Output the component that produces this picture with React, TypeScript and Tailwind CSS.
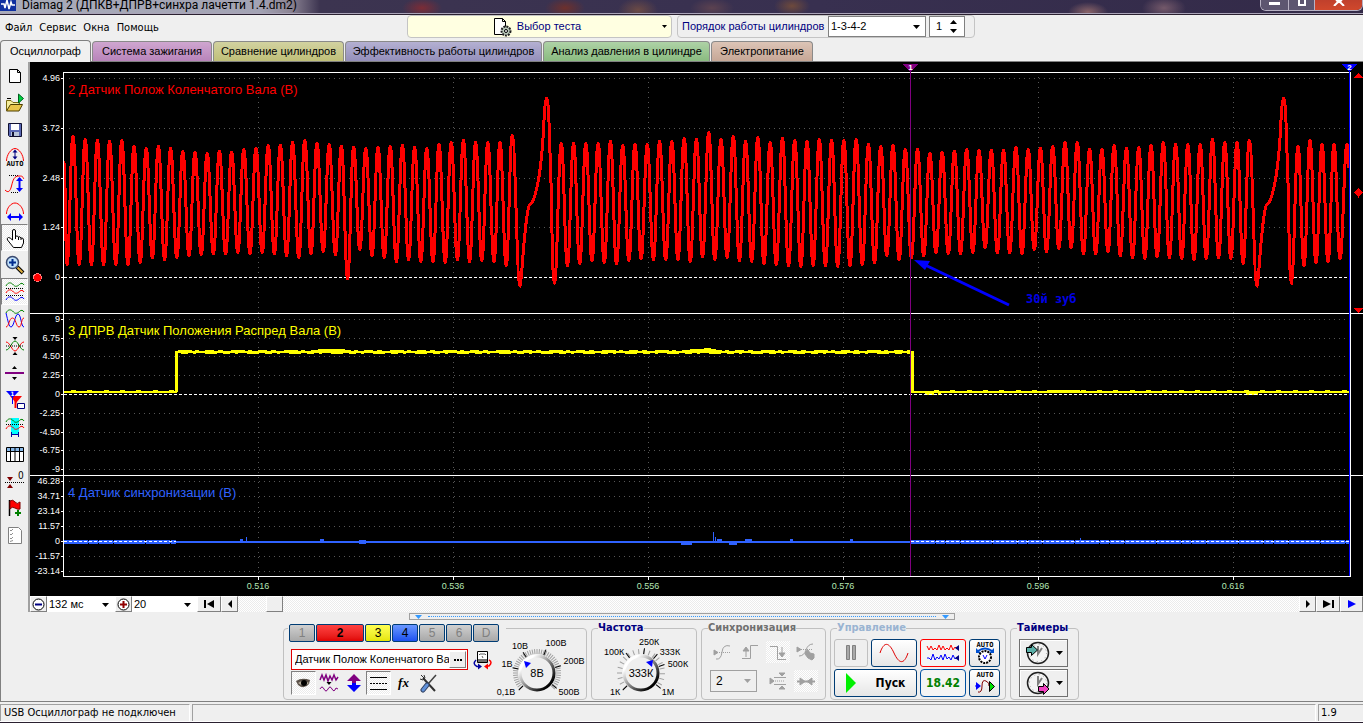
import { type ReactNode } from 'react';
import clsx from 'clsx';

const UI_FONT = "font-['DejaVu_Sans_Condensed','DejaVu_Sans',sans-serif]";
const SANS = "font-['Liberation_Sans',sans-serif]";
const CHECKER = 'bg-[repeating-conic-gradient(#ffffff_0_25%,#ebebeb_0_50%)] bg-[length:2px_2px]';

/* ---------- waveform data ---------- */

type Point = [number, number];

const firstPeaks = [
  136, 139, 140, 141, 140, 146, 148, 146, 148, 151, 152, 153, 151, 152, 149, 148, 145, 145, 142, 140, 143, 144, 146,
  147, 148, 147, 146, 145, 147, 148, 144, 142, 140, 142, 142, 142, 135,
];
const firstTroughs = [
  265, 265, 265, 265, 265, 265, 263, 258, 260, 258, 256, 255, 254, 254, 253, 254, 253, 254, 256, 258, 254, 252, 255,
  279, 250, 256, 258, 262, 260, 262, 262, 263, 260, 262, 261, 262, 266,
];
const secondPeaks = [
  143, 143, 143, 143, 141, 145, 144, 144, 141, 141, 138, 139, 132, 139, 136, 141, 137, 142, 138, 140, 141, 139, 140,
  140, 139, 144, 146, 145, 149, 149, 153, 152, 151, 149, 150, 150, 150, 147, 149, 148, 146, 142, 142, 149, 149, 145,
  148, 147, 145, 142, 144, 144, 144, 139, 142, 142, 140,
];
const secondTroughs = [
  266, 264, 261, 263, 264, 261, 259, 260, 260, 260, 262, 257, 260, 258, 261, 262, 264, 265, 266, 267, 266, 266, 267,
  266, 265, 263, 256, 260, 258, 256, 253, 254, 254, 253, 248, 253, 253, 254, 250, 252, 249, 248, 254, 254, 252, 256,
  258, 259, 257, 258, 259, 260, 259, 258, 259, 264,
];

const buildCrank = () => {
  const pts: Point[] = [[64, 162]];
  firstPeaks.forEach((peak, i) => {
    pts.push([67 + i * 12.2, firstTroughs[i]], [73 + i * 12.2, peak]);
  });
  pts.push([520, 286]);
  const segs = [wave(pts), gap(0)];
  const mid: Point[] = [[554.5, 283]];
  secondPeaks.forEach((peak, i) => {
    mid.push([561.3 + i * 12.286, peak]);
    if (i < secondTroughs.length) mid.push([567.4 + i * 12.286, secondTroughs[i]]);
  });
  mid.push([1257, 286]);
  segs.push(wave(mid).replace('M', 'L'), gap(737));
  segs.push(
    wave([
      [1291.5, 281], [1298, 146], [1304, 266], [1310, 140], [1316, 263], [1322, 144], [1328, 262], [1334, 144],
      [1340, 259], [1347, 144],
    ]).replace('M', 'L'),
  );
  return segs.join(' ') + ' L1349 168';
};

// Smooth curve through alternating peaks and troughs
const wave = (pts: Point[]) =>
  pts
    .map(([x, y], i) => {
      if (i === 0) return `M${x} ${y}`;
      const [px, py] = pts[i - 1];
      const m = (x - px) * 0.4;
      return `C${px + m} ${py} ${x - m} ${y} ${x} ${y}`;
    })
    .join(' ');

// The two missing teeth of the crankshaft wheel
const gap = (dx: number) =>
  `C${522 + dx} 282 ${524 + dx} 222 ${529 + dx} 206 L${533 + dx} 201 C${538 + dx} 188 ${541 + dx} 170 ${543 + dx} 138 ` +
  `C${544 + dx} 120 ${545 + dx} 98 ${546.5 + dx} 98 C${549 + dx} 98 ${549 + dx} 130 ${550.5 + dx} 165 ` +
  `C${552 + dx} 205 ${552 + dx} 283 ${554.5 + dx} 283`;

const crankPath = buildCrank();

const scales = [
  { y: 78, label: '4.96' }, { y: 128, label: '3.72' }, { y: 178, label: '2.48' }, { y: 227, label: '1.24' },
  { y: 277, label: '0', zero: true },
  { y: 319, label: '9' }, { y: 338, label: '6.75' }, { y: 356, label: '4.50' }, { y: 375, label: '2.25' },
  { y: 394, label: '0', zero: true },
  { y: 413, label: '-2.25' }, { y: 432, label: '-4.50' }, { y: 450, label: '-6.75' }, { y: 469, label: '-9' },
  { y: 481, label: '46.28' }, { y: 496, label: '34.71' }, { y: 511, label: '23.14' }, { y: 526, label: '11.57' },
  { y: 541, label: '0' },
  { y: 556, label: '-11.57' }, { y: 571, label: '-23.14' },
];

const times = [
  { x: 258, label: '0.516' }, { x: 453, label: '0.536' }, { x: 648, label: '0.556' },
  { x: 843, label: '0.576' }, { x: 1038, label: '0.596' }, { x: 1233, label: '0.616' },
];

function Scope() {
  return (
    <svg viewBox="30 62 1333 534" className={clsx('block w-full bg-black', SANS)} shapeRendering="crispEdges">
      <g stroke="#565656" strokeDasharray="1 4">
        {scales.map(s => !s.zero && <path key={s.y} d={`M69 ${s.y + 0.5}H1349`} />)}
        {times.map(t => <path key={t.x} d={`M${t.x + 0.5} 77V576`} />)}
      </g>

      <path d="M64 392H176V351.5H911.5V392H1349" fill="none" stroke="#ffff00" strokeWidth="2" />
      <path d="M176 392V351.5M912 351V392" stroke="#ffff00" strokeWidth="3" />
      <g stroke="#ffff00" fill="none">
        <path d="M71 390.5H174M934 390.5H1349" strokeWidth="1" strokeDasharray="5 11.3" />
        <path d="M178 350.5H910" strokeWidth="2" strokeDasharray="14 3 4 6 9 4 5 8" />
        <path d="M181 353H910" strokeWidth="1" strokeDasharray="7 5 3 9 12 6" />
        <path d="M318 349.5H345M690 349.5H716M704 348.5H711" strokeWidth="2" />
        <path d="M925 393.5H934M938 393.5H941M1246 393.5H1258M1047 391H1080" strokeWidth="2" />
      </g>

      <g stroke="#2f62ff" fill="none">
        <path d="M64 541.5H1349" strokeWidth="2" />
        <path d="M64 541.5H176M911 541.5H1349" strokeWidth="4" strokeDasharray="24 1 9 1 14 1 31 1" />
        <path d="M240 541H243M320 541H324M359 542H366M681 542.5H692M717 541H722M729 543H737M745 541H752M790 541H793M850 541H853" strokeWidth="4" />
        <path d="M713.5 532V541M715.5 537V541M1080.5 538V541M246.5 537V541" />
      </g>

      <g stroke="#ffffff" strokeDasharray="3 2">
        <path d="M64 277.5H1350M64 394.5H1350M64 541.5H176M911 541.5H1349" />
      </g>

      <path d={crankPath} fill="none" stroke="#ff0000" strokeWidth="3" />

      <g stroke="#ffffff" fill="none">
        <path d="M63.5 577V72.5H1350.5V576.5H63M30 313.5H1363M30 475.5H1363" />
        {scales.map(s => <path key={s.y} d={`M61 ${s.y + 0.5}H63`} />)}
        {times.map(t => <path key={t.x} d={`M${t.x + 0.5} 577V580`} />)}
      </g>

      <path d="M910.5 72V576" stroke="#800080" />
      <path d="M1349 72V576" stroke="#0000ff" />
      <path d="M903 64H918L910.5 72Z" fill="#800080" />
      <path d="M1342 64H1357L1349.5 72Z" fill="#0000ff" />
      <g fill="#ffffff" fontSize="8" fontWeight="700" textAnchor="middle">
        <text x="910.5" y="70">1</text>
        <text x="1349.5" y="70">2</text>
      </g>

      <g fill="#ff0000">
        <path d="M1354 78H1363L1358.5 73ZM1354 308H1363L1358.5 313ZM1353.5 192.5L1358.5 187.5L1363 192.5L1358.5 197.5Z" />
        <circle cx="37.5" cy="277.5" r="4" stroke="#ff8080" />
      </g>

      <g shapeRendering="auto">
        <path d="M1009 305L922 263.5" stroke="#0000ff" strokeWidth="3" />
        <path d="M914 260L930 261L925 270Z" fill="#0000ff" />
      </g>

      <g fill="#ffffff" fontSize="9" textAnchor="end">
        {scales.map(s => <text key={s.y} x="60" y={s.y + 3}>{s.label}</text>)}
      </g>
      <g fill="#b4e6b4" fontSize="9" textAnchor="middle">
        {times.map(t => <text key={t.x} x={t.x} y="589">{t.label}</text>)}
      </g>
      <g fontSize="13">
        <text x="68" y="94" fill="#ff0000">2 Датчик Полож Коленчатого Вала (В)</text>
        <text x="68" y="335" fill="#ffff00">3 ДПРВ Датчик Положения Распред Вала (В)</text>
        <text x="68" y="497" fill="#2f62ff">4 Датчик синхронизации (В)</text>
      </g>
      <text x="1026" y="303" fill="#0000e6" fontSize="12" fontWeight="700" className="font-['DejaVu_Sans_Mono',monospace]">
        30й зуб
      </text>
    </svg>
  );
}

/* ---------- icons ---------- */

function Icon({ children, size = 20 }: { children: ReactNode; size?: number }) {
  return (
    <svg width={size} height={size} viewBox={`0 0 ${size} ${size}`} fill="none" stroke="#000" className="shrink-0">
      {children}
    </svg>
  );
}

const autoText = (
  <text x="10" y="19" textAnchor="middle" fontSize="7" fontWeight="700" fill="#000" stroke="none"
    className="font-['DejaVu_Sans_Mono',monospace]">AUTO</text>
);

const sideTools: { name: string; pressed?: boolean; icon: ReactNode }[] = [
  { name: 'Новый', icon: <path d="M4.500 3.500H12.500L15.500 6.500V16.500H4.500ZM12.500 3.500V6.500H15.500" fill="#fff" /> },
  {
    name: 'Открыть',
    icon: (
      <>
        <path d="M1.500 17.500V7.500H6L8 9.500H14.500V11" fill="#f5ee9c" stroke="#7a6a10" />
        <path d="M1.500 18L5.500 11.500H17.500L14 18Z" fill="#e9c64a" stroke="#4c3f00" />
        <path d="M13.500 1V10L18.500 5.500Z" fill="#00d040" stroke="#006020" />
        <path d="M2 5.500H6" />
      </>
    ),
  },
  {
    name: 'Сохранить',
    icon: (
      <>
        <path d="M3.500 3.500H16.500V16.500H4.500L3.500 15.500Z" fill="#5a68b4" stroke="#101030" />
        <path d="M6 4H14V10H6Z" fill="#fff" stroke="none" />
        <path d="M6 12H14V16H6Z" fill="#b8c4d8" stroke="none" />
        <path d="M7 12H9V16H7Z" fill="#101030" stroke="none" />
      </>
    ),
  },
  {
    name: 'Автоамплитуда',
    icon: (
      <>
        <path d="M1.500 14C1.500 8 6 1.500 10 1.500S18.500 8 18.500 14" stroke="#ff0000" />
        <path d="M10 4V11" stroke="#000080" />
        <path d="M7.500 5.500L10 2.500L12.500 5.500ZM7.500 9.500L10 12.500L12.500 9.500Z" fill="#000080" stroke="none" />
        {autoText}
      </>
    ),
  },
  {
    name: 'Амплитуда',
    icon: (
      <>
        <path d="M4 1.500H14M6 18.500H14" strokeDasharray="1 1" />
        <path d="M0 16C3 19 5 18 6.500 12S9 2 14 2S17 3 19 5" stroke="#ff0000" />
        <path d="M14.500 4V16" stroke="#0000ff" strokeWidth="2" />
        <path d="M11 7L14.500 3L18 7ZM11 14L14.500 18L18 14Z" fill="#0000ff" stroke="none" />
      </>
    ),
  },
  {
    name: 'Развёртка',
    icon: (
      <>
        <path d="M1.500 13C1.500 7 6 2 10 2S18.500 7 18.500 13" stroke="#ff0000" />
        <path d="M5 16H15" stroke="#0000ff" strokeWidth="2" />
        <path d="M6 12L2 16L6 20ZM14 12L18 16L14 20Z" fill="#0000ff" stroke="none" />
      </>
    ),
  },
  {
    name: 'Рука',
    pressed: true,
    icon: (
      <path d="M7.500 12V3Q7.500 1.500 9 1.500T10.500 3V8.500Q12 7 13.500 9Q15 8 16 10Q18.500 9.500 18.500 12V15L16.500 19.500H8.500L2.500 12Q1.500 10 3.500 9.500Q5 9.500 7.500 12ZM10.500 8V11M13.500 9V12M16 10V12" fill="#fff" />
    ),
  },
  {
    name: 'Масштаб',
    icon: (
      <>
        <path d="M12 12L18 18" stroke="#000" strokeWidth="4" />
        <path d="M12.500 12.500L17.500 17.500" stroke="#e0b040" strokeWidth="2" />
        <circle cx="7.500" cy="7.500" r="6" fill="#bfe0fb" stroke="#3a4a70" strokeWidth="1.500" />
        <path d="M7.500 4V11M4 7.500H11" stroke="#002c90" strokeWidth="2" />
      </>
    ),
  },
  {
    name: 'Раздельно',
    pressed: true,
    icon: (
      <>
        <path d="M1 4C3 0 6 0 8.500 3S14 3 15 2S18 1 19 3" stroke="#008000" />
        <path d="M1 11C3 7 6 7 8.500 10S14 10 15 9S18 8 19 10" stroke="#ff0000" />
        <path d="M1 18C3 14 6 14 8.500 17S14 17 15 16S18 15 19 17" stroke="#0000ff" />
        <path d="M1 6.500H19M1 13.500H19" strokeDasharray="1 1" />
      </>
    ),
  },
  {
    name: 'Совместно',
    icon: (
      <>
        <path d="M1 4C3 0 6 0 8.500 3S14 3 15 2S18 1 19 3" stroke="#008000" />
        <path d="M1 4C3 12 4 18 6 18C9 18 10 5 13 5C16 5 16 18 19 18" stroke="#0000ff" />
        <path d="M1 18C4 18 4 9 7.500 9S11 18 14 18S16 9 19 9" stroke="#ff0000" />
      </>
    ),
  },
  {
    name: 'Центрировать',
    icon: (
      <>
        <path d="M1 6C5 6 7 15 10 15S15 6 19 6" stroke="#ff0000" />
        <path d="M1 14C5 14 7 5 10 5S15 14 19 14" stroke="#008000" />
        <path d="M1 10H19" strokeDasharray="1 1" />
        <path d="M7.500 1H12.500L10 4ZM7.500 19H12.500L10 16Z" fill="#000" stroke="none" />
      </>
    ),
  },
  {
    name: 'Разделитель',
    icon: (
      <>
        <path d="M0 10H19" stroke="#800080" strokeWidth="2" />
        <path d="M7 6H12L9.500 3ZM7 14H12L9.500 17Z" fill="#000" stroke="none" />
      </>
    ),
  },
  {
    name: 'Маркеры',
    icon: (
      <>
        <path d="M5 6H17L11 13Z" fill="#ff0000" stroke="none" />
        <path d="M10.500 10V18" stroke="#ff0000" strokeWidth="2" />
        <path d="M1 1H14L7.500 8Z" fill="#0000ff" stroke="none" />
        <path d="M7.500 7V14" stroke="#0000ff" />
        <text x="7.500" y="6" fontSize="6" fontWeight="700" fill="#fff" stroke="none" textAnchor="middle">1</text>
        <path d="M12.500 13.500H19.500V18.500H12.500Z" fill="#fff" stroke="#000080" />
      </>
    ),
  },
  {
    name: 'Выделение',
    icon: (
      <>
        <path d="M6 1H14V18H6Z" fill="#00ffff" stroke="none" />
        <path d="M1 5C3 1 6 1 8.500 4S14 4 15 3S18 2 19 4" stroke="#008000" />
        <path d="M1 12C3 8 6 8 8.500 11S14 11 15 10S18 9 19 11" stroke="#ff0000" />
        <path d="M1 7.500H19" strokeDasharray="1 1" />
        <path d="M6 17.500H14M6.500 15V20M13.500 15V20" stroke="#0000a0" />
      </>
    ),
  },
  {
    name: 'Таблица',
    icon: (
      <>
        <path d="M1.500 3.500H18.500V17.500H1.500Z" fill="#fff" />
        <path d="M2 4H18V7H2Z" fill="#88b8e8" stroke="none" />
        <path d="M1.500 7.500H18.500M5.500 4V17M10 4V17M14.500 4V17" />
      </>
    ),
  },
  {
    name: 'Ноль',
    icon: (
      <>
        <path d="M0 11.500H19" strokeDasharray="1 1" />
        <path d="M2 6H8L5 10ZM2 17H8L5 13Z" fill="#800000" stroke="none" />
        <text x="13" y="8" fontSize="10" fill="#000" stroke="none">0</text>
      </>
    ),
  },
  {
    name: 'Флаг',
    icon: (
      <>
        <path d="M4.500 2V18" strokeWidth="1.500" />
        <path d="M5 3Q8 1 10 4T15 4V11Q13 12 10 10T5 11Z" fill="#ff0000" stroke="#800000" />
        <path d="M10 15H16M13 12V18" stroke="#008000" strokeWidth="2" />
      </>
    ),
  },
  {
    name: 'Отчёт',
    icon: (
      <>
        <path d="M3.500 2.500H13.500L16.500 5.500V18.500H3.500Z" fill="#fff" stroke="#808080" />
        <path d="M5 5L6 6L8 4M5 9L6 10L8 8M5 13L6 14L8 12M5 16.500L8 15.500" stroke="#909090" />
      </>
    ),
  },
];

const DownArrow = ({ className }: { className?: string }) => (
  <svg width="7" height="4" viewBox="0 0 7 4" className={clsx('shrink-0 pointer-events-none', className)}>
    <path d="M0 0H7L3.500 4Z" fill="currentColor" />
  </svg>
);

/* ---------- header ---------- */

function TitleBar() {
  return (
    <header className="h-[15px] shrink-0 flex items-start justify-between overflow-hidden border-b border-[#2a2030] shadow-[inset_0_-1px_0_#aaa4b8] bg-[radial-gradient(ellipse_20px_10px_at_422px_8px,#7c2c36,transparent),radial-gradient(ellipse_20px_10px_at_565px_8px,#6e302c,transparent),radial-gradient(ellipse_20px_12px_at_638px_10px,#6b4a45,transparent),radial-gradient(ellipse_22px_10px_at_712px_8px,#5c4250,transparent),radial-gradient(ellipse_18px_10px_at_792px_6px,#6e4a3c,transparent),radial-gradient(ellipse_20px_10px_at_1088px_12px,#8a6468,transparent),radial-gradient(ellipse_22px_12px_at_1164px_8px,#74596a,transparent),linear-gradient(90deg,#a9acba_0,#a3a3b4_260px,#8d8595_290px,#3c3450_320px,#383050_60%,#332a48_100%)]">
      <div className="flex items-start gap-[6px]">
        <svg width="16" height="12" viewBox="0 0 16 12">
          <path d="M0 0H16V11H0Z" fill="#1030a0" />
          <path d="M1 4H4L5 8L7 0L9 9L11 2L12 5H15" fill="none" stroke="#fff" strokeWidth="1.500" />
        </svg>
        <h1 className="text-[12px] leading-[10px] whitespace-nowrap text-black font-[Roboto,sans-serif]">
          Diamag 2 (ДПКВ+ДПРВ+синхра лачетти 1.4.dm2)
        </h1>
      </div>
      <div className="flex h-[11px] rounded-b-md border border-t-0 border-[#b8b2c4] overflow-hidden">
        <button aria-label="Свернуть" className="w-[28px] flex justify-center bg-[#5d5670] border-r border-[#b8b2c4]">
          <span className="mt-[2px] h-[3px] w-[11px] bg-white" />
        </button>
        <button aria-label="Развернуть" className="w-[26px] flex justify-center bg-[#5d5670] border-r border-[#b8b2c4]">
          <span className="h-[6px] w-[8px] border-2 border-t-0 border-white" />
        </button>
        <button aria-label="Закрыть" className="w-[47px] flex justify-center bg-linear-to-b from-[#c0402c] to-[#d0482c]">
          <svg width="12" height="6" viewBox="0 0 12 6"><path d="M1 6L6 1L11 6M3 0L6 2L9 0" stroke="#fff" strokeWidth="2" fill="none" /></svg>
        </button>
      </div>
    </header>
  );
}

function MenuRow() {
  return (
    <div className="h-[25px] shrink-0 flex items-start">
      <nav className="w-[407px] shrink-0 pt-[5px] pl-[5px] flex gap-[7px] text-[11px] leading-4">
        {['Файл', 'Сервис', 'Окна', 'Помощь'].map(item => (
          <button key={item}>{item}</button>
        ))}
      </nav>
      <button className={clsx('w-[265px] h-[23px] shrink-0 flex items-center px-1 rounded border border-[#c4c4c4] bg-[#ffffe1] text-[11px] text-[#000080]', SANS)}>
        <span className="flex-1 flex items-center justify-center gap-[5px]">
          <svg width="19" height="20" viewBox="0 0 19 20" fill="none" stroke="#000">
            <path d="M1.500 1.500H9.500L12.500 4.500V17.500H1.500ZM9.500 1.500V4.500H12.500" fill="#fff" />
            <circle cx="13" cy="14" r="4.500" fill="#b8c8b8" stroke="#202020" strokeWidth="2" strokeDasharray="2 1" />
            <circle cx="13" cy="14" r="1.500" fill="#fff" />
          </svg>
          Выбор теста
        </span>
        <svg width="5" height="3" viewBox="0 0 5 3"><path d="M0 0H5L2.500 3Z" fill="#000" /></svg>
      </button>
      <div className={clsx('ml-[5px] h-[23px] flex items-center pl-1 pr-[9px] rounded border border-[#c4c4c4] text-[11px]', SANS)}>
        <label htmlFor="order" className="w-[146px] whitespace-nowrap text-[#000080]">Порядок работы цилиндров</label>
        <div className="relative">
          <select id="order" defaultValue="1-3-4-2" className="appearance-none block w-[98px] h-[21px] pl-[2px] bg-white border border-[#808080]">
            <option>1-3-4-2</option>
          </select>
          <DownArrow className="absolute right-[6px] top-[9px]" />
        </div>
        <div className="ml-[3px] w-[36px] h-[21px] flex items-center bg-white border border-[#808080]">
          <input aria-label="Цилиндр" defaultValue="1" className="w-[20px] pl-[6px] bg-transparent" />
          <div className="flex flex-col gap-[5px]">
            <button aria-label="Больше"><DownArrow className="rotate-180" /></button>
            <button aria-label="Меньше"><DownArrow /></button>
          </div>
        </div>
      </div>
    </div>
  );
}

const tabs = [
  { label: 'Система зажигания', className: 'w-[120px] from-[#cfa6d0] to-[#b884ba]' },
  { label: 'Сравнение цилиндров', className: 'w-[131px] from-[#d2d2a0] to-[#bfbf78]' },
  { label: 'Эффективность работы цилиндров', className: 'w-[197px] from-[#b4b0d2] to-[#948fba]' },
  { label: 'Анализ давления в цилиндре', className: 'w-[167px] from-[#aed2a6] to-[#8abb80]' },
  { label: 'Электропитание', className: 'w-[102px] from-[#dcc4b6] to-[#c6a796]' },
];

function Tabs() {
  return (
    <div className={clsx('h-[22px] shrink-0 flex items-end gap-px border-b border-[#808080] text-[11px]', SANS)} role="tablist">
      <button role="tab" aria-selected className="-mb-px w-[91px] h-[22px] rounded-t border border-b-0 border-[#808080] bg-[#f0f0f0]">
        Осциллограф
      </button>
      {tabs.map(tab => (
        <button key={tab.label} role="tab" className={clsx('h-[20px] rounded-t border border-b-0 border-[#8a8a8a] bg-linear-to-b whitespace-nowrap', tab.className)}>
          {tab.label}
        </button>
      ))}
    </div>
  );
}

/* ---------- scroll row ---------- */

const RAISED = 'shrink-0 flex items-center justify-center bg-[#efefef] border border-t-white border-l-white border-r-[#808080] border-b-[#808080]';

function ScrollRow() {
  return (
    <div className={clsx('h-4 flex text-[11px]', SANS)}>
      <button aria-label="Уменьшить" className={clsx(RAISED, 'w-[17px]')}>
        <svg width="13" height="13" viewBox="0 0 13 13"><circle cx="6.500" cy="6.500" r="5.500" fill="#fff" stroke="#000" /><path d="M3 6.500H10" stroke="#000080" strokeWidth="2" /></svg>
      </button>
      <div className="relative">
        <select aria-label="Развёртка" className="appearance-none block w-[68px] h-4 pl-[2px] bg-white">
          <option>132 мс</option>
        </select>
        <DownArrow className="absolute right-[6px] top-[7px]" />
      </div>
      <button aria-label="Увеличить" className={clsx(RAISED, 'w-[17px]')}>
        <svg width="13" height="13" viewBox="0 0 13 13"><circle cx="6.500" cy="6.500" r="5.500" fill="#fff" stroke="#000" /><path d="M3 6.500H10M6.500 3V10" stroke="#900000" strokeWidth="2" /></svg>
      </button>
      <div className="relative">
        <select aria-label="Масштаб" className="appearance-none block w-[65px] h-4 pl-[2px] bg-white">
          <option>20</option>
        </select>
        <DownArrow className="absolute right-[6px] top-[7px]" />
      </div>
      <button aria-label="В начало" className={clsx(RAISED, 'w-[24px]')}>
        <svg width="11" height="8" viewBox="0 0 11 8"><path d="M0 0H2V8H0ZM10 0V8L3 4Z" /></svg>
      </button>
      <button aria-label="Назад" className={clsx(RAISED, 'w-[17px]')}>
        <svg width="4" height="8" viewBox="0 0 4 8"><path d="M4 0V8L0 4Z" /></svg>
      </button>
      <div className={clsx('flex-1 flex pl-7', CHECKER)}>
        <button aria-label="Прокрутка" className={clsx(RAISED, 'w-[17px]')} />
      </div>
      <button aria-label="Вперёд" className={clsx(RAISED, 'w-[17px]')}>
        <svg width="4" height="8" viewBox="0 0 4 8"><path d="M0 0V8L4 4Z" /></svg>
      </button>
      <button aria-label="В конец" className={clsx(RAISED, 'w-[24px]')}>
        <svg width="11" height="8" viewBox="0 0 11 8"><path d="M9 0H11V8H9ZM0 0V8L8 4Z" /></svg>
      </button>
      <button aria-label="Воспроизвести" className={clsx(RAISED, 'w-[23px]')}>
        <svg width="8" height="8" viewBox="0 0 8 8"><path d="M0 0V8L8 4Z" fill="#0000ff" /></svg>
      </button>
    </div>
  );
}

/* ---------- control panels ---------- */

interface KnobProps {
  box: string;
  width: number;
  height: number;
  value: string;
  step: number;
  pointer: string;
  marks: { label: string; x: number; y: number; deg: number }[];
}

function Knob({ box, width, height, value, step, pointer, marks }: KnobProps) {
  const ticks: number[] = [];
  for (let a = -222; a <= 42; a += step) ticks.push(a);
  const id = `knob-${width}`;
  return (
    <svg width={width} height={height} viewBox={box} className={clsx('shrink-0 overflow-visible', SANS)}>
      <defs>
        <linearGradient id={id} x1="0" y1="0" x2="1" y2="1">
          <stop offset="0.2" stopColor="#ffffff" />
          <stop offset="0.5" stopColor="#8c8c8c" />
          <stop offset="0.85" stopColor="#000000" />
        </linearGradient>
      </defs>
      {ticks.map(a => <path key={a} d="M19 0H24" stroke="#a0a0a0" transform={`rotate(${a})`} />)}
      {marks.map(m => <path key={m.label} d="M19 0H25" stroke="#000" transform={`rotate(${m.deg})`} />)}
      <circle r="17" fill="#efefef" stroke={`url(#${id})`} strokeWidth="3" />
      <path d={pointer} fill="#0000ff" />
      <g fontSize="9" textAnchor="middle">
        {marks.map(m => <text key={m.label} x={m.x} y={m.y}>{m.label}</text>)}
      </g>
      <text y="4" fontSize="11" textAnchor="middle">{value}</text>
    </svg>
  );
}

const channels = [
  { label: '1', className: 'w-[26px] from-[#d0d0d0] to-[#a8a8a8] text-[#808080]' },
  { label: '2', className: 'w-[48px] from-[#ff4040] to-[#e00000] text-black font-bold' },
  { label: '3', className: 'w-[26px] from-[#ffff50] to-[#e6e600] text-black' },
  { label: '4', className: 'w-[26px] from-[#6a96ff] to-[#1e50f0] text-black' },
  { label: '5', className: 'w-[26px] from-[#d0d0d0] to-[#a8a8a8] text-[#808080]' },
  { label: '6', className: 'w-[26px] from-[#d0d0d0] to-[#a8a8a8] text-[#808080]' },
  { label: 'D', className: 'w-[26px] from-[#d0d0d0] to-[#a8a8a8] text-[#808080]' },
];

const PRESSED = clsx(CHECKER, 'border border-t-[#808080] border-l-[#808080] border-r-white border-b-white');

function ChannelPanel() {
  return (
    <div className="mt-[5px] w-[304px] shrink-0 rounded border border-[#c0c0c0]">
      <div className="-mt-[5px] ml-1 w-[218px] h-[18px] px-px flex gap-px bg-[#efefef] text-[12px]">
        {channels.map(ch => (
          <button key={ch.label} className={clsx('h-[18px] rounded-[2px] border border-[#003c74] bg-linear-to-b leading-4', SANS, ch.className)}>
            {ch.label}
          </button>
        ))}
      </div>
      <div className="flex">
        <div className="w-[209px] pl-[7px] pt-[7px]">
          <div className="flex items-center gap-[5px]">
            <div className="w-[177px] h-[21px] flex p-px bg-white border border-[#e00000]">
              <input
                aria-label="Имя канала"
                defaultValue="Датчик Полож Коленчатого Вала (В)"
                className={clsx('min-w-0 flex-1 pl-[2px] text-[11px] bg-white', SANS)}
              />
              <button aria-label="Выбрать датчик" className={clsx(RAISED, 'w-[17px]')}>
                <svg width="8" height="2" viewBox="0 0 8 2"><path d="M0 0H2V2H0ZM3 0H5V2H3ZM6 0H8V2H6Z" /></svg>
              </button>
            </div>
            <button aria-label="Инвертировать">
              <Icon>
                <path d="M4.500 1.500H14.500V12.500H4.500Z" fill="#fff" />
                <path d="M5 9H14V12H5Z" fill="#707070" stroke="none" />
                <path d="M6 5L7 4H12L13 5M9 6L10 8" stroke="#606060" />
                <path d="M3 10Q-1 14 4 16.500H6" stroke="#0000a0" strokeWidth="1.500" />
                <path d="M5 13.500V19.500L9 16.500Z" fill="#0000a0" stroke="none" />
                <path d="M16 10Q20 12 16 16H14" stroke="#ff0000" strokeWidth="1.500" />
                <path d="M15 13.500V19.500L11 16.500Z" fill="#ff0000" stroke="none" />
              </Icon>
            </button>
          </div>
          <div className="mt-px flex items-center">
            <button aria-label="Показать" className={clsx('w-[25px] h-[24px] flex items-center justify-center', PRESSED)}>
              <svg width="15" height="11" viewBox="0 0 15 11"><path d="M0 3Q6 -1 14 2L13 6Q8 12 2 7Z" fill="#5a5048" /><path d="M2 5Q7 1 13 5Q8 10 2 5Z" fill="#b0a898" /><circle cx="8" cy="5" r="3" /></svg>
            </button>
            <button aria-label="Фильтр" className="w-[25px] flex justify-center">
              <Icon>
                <path d="M1 7L3 2L5 7L7 2L9 8L11 3L13 7L15 2L17 7L19 4" stroke="#800080" strokeWidth="1.500" />
                <path d="M1 16Q3 12 5 16T9 16T13 16T17 15L19 16" stroke="#800080" />
                <path d="M7.500 9H12.500L10 12Z" fill="#000" stroke="none" />
              </Icon>
            </button>
            <button aria-label="Сдвиг" className="w-[25px] flex justify-center">
              <Icon>
                <path d="M10 1L17 8H12V10H8V8H3Z" fill="#800080" stroke="none" />
                <path d="M10 19L17 12H12V10H8V12H3Z" fill="#0000ff" stroke="none" />
              </Icon>
            </button>
            <button aria-label="Линии" className={clsx('w-[25px] h-[24px] flex items-center justify-center', PRESSED)}>
              <Icon>
                <path d="M1 4.500H18M1 16.500H18" />
                <path d="M1 10.500H18" strokeDasharray="2 1" />
              </Icon>
            </button>
            <button aria-label="Функция" className="w-[25px] text-[13px] leading-5 font-bold italic font-['Liberation_Serif',serif]">
              fx
            </button>
            <button aria-label="Настройки" className="w-[23px] flex justify-center">
              <Icon>
                <path d="M5 5L17 18" stroke="#303030" strokeWidth="2" />
                <path d="M3 2L6 5M2 6L5 7L7 5L6 2" stroke="#303030" />
                <path d="M18 2L10 11" stroke="#404040" strokeWidth="1.500" />
                <path d="M9 12L5 17" stroke="#304060" strokeWidth="5" strokeLinecap="round" />
                <path d="M9 12L5 17" stroke="#6090d8" strokeWidth="3" strokeLinecap="round" />
              </Icon>
            </button>
          </div>
        </div>
        <Knob
          box="-44 -31 93 56"
          width={93}
          height={56}
          value="8В"
          step={6}
          pointer="M-13 -12L-6 -10L-11 -5Z"
          marks={[
            { label: '10В', x: -17, y: -24, deg: -124 },
            { label: '100В', x: 19, y: -27, deg: -69 },
            { label: '1В', x: -30, y: -6, deg: -168 },
            { label: '200В', x: 37, y: -9, deg: -17 },
            { label: '0,1В', x: -31, y: 22, deg: 137 },
            { label: '500В', x: 32, y: 22, deg: 38 },
          ]}
        />
      </div>
    </div>
  );
}

function Group({ title, titleClass, className, children }: { title: string; titleClass: string; className: string; children: ReactNode }) {
  return (
    <fieldset className={clsx('h-[77px] shrink-0 rounded border border-[#c0c0c0]', className)}>
      <legend className={clsx('ml-[6px] text-[11px] leading-[10px] font-bold whitespace-nowrap', titleClass)}>{title}</legend>
      {children}
    </fieldset>
  );
}

const SYNC = 'w-[24px] h-[22px] flex items-center justify-center';
const BLUE_BTN = 'h-[28px] flex items-center justify-center rounded-[3px] border border-[#003c74] bg-linear-to-b from-white to-[#e6e6e6]';
const TIMER_BTN = 'w-[49px] h-[28px] flex items-center justify-center gap-[6px] bg-[#efefef] border border-[#707070] shadow-[inset_1px_1px_0_#ffffff]';

function SyncPanel() {
  return (
    <Group title="Синхронизация" titleClass="text-[#707070]" className="w-[125px]">
      <div className="mt-2 ml-2 grid grid-cols-[repeat(4,24px)] gap-x-1 gap-y-[7px]">
        <button aria-label="Уровень" className={SYNC}>
          <Icon><g stroke="#a0a0a0"><path d="M2 8L6 10.500L2 13Z" fill="#a0a0a0" /><path d="M5 10.500H18" strokeDasharray="1 1" /><path d="M4 17Q9 18 10 10T18 4" /></g></Icon>
        </button>
        <button aria-label="По фронту" className={SYNC}>
          <Icon><g stroke="#a0a0a0"><path d="M2 16.500H10.500V3.500H18M6 15V7" /><path d="M3 9L6 5L9 9Z" fill="#a0a0a0" /></g></Icon>
        </button>
        <button aria-label="По спаду" className={clsx(SYNC, CHECKER)}>
          <Icon><g stroke="#a0a0a0"><path d="M2 4.500H9.500V17.500H18M14 5V12" /><path d="M11 11L14 15L17 11Z" fill="#a0a0a0" /></g></Icon>
        </button>
        <button aria-label="Вручную" className={SYNC}>
          <Icon><g stroke="#a0a0a0"><path d="M1 5L5 7.500L1 10ZM10 9L12 8L14 11L18 12V16L16 18L12 16L9 12Z" fill="#a0a0a0" /><path d="M5 7.500H17" strokeDasharray="1 1" /><path d="M3 14Q8 14 10 8T17 2" /></g></Icon>
        </button>
        <div className="col-span-2 relative w-[47px] h-[22px]">
          <select aria-label="Канал синхронизации" className={clsx('appearance-none block w-full h-full pl-[5px] text-[12px] text-black bg-[#efefef] border border-[#a0a0a0]', SANS)}>
            <option>2</option>
          </select>
          <DownArrow className="absolute right-[6px] top-[9px] text-[#a0a0a0]" />
        </div>
        <button aria-label="Окно" className={SYNC}>
          <Icon><g stroke="#a0a0a0"><path d="M2 7L6 10L2 13Z" fill="#a0a0a0" /><path d="M5 10H16" strokeDasharray="1 1" /><path d="M6 6.500H18M6 13.500H18" /><path d="M11 2H17L14 5ZM11 18H17L14 15Z" fill="#a0a0a0" /></g></Icon>
        </button>
        <button aria-label="Сжать" className={clsx(SYNC, CHECKER)}>
          <Icon><g stroke="#a0a0a0"><path d="M1 10.500H19" strokeWidth="2" /><path d="M4 7L9 10.500L4 14ZM16 7L11 10.500L16 14Z" fill="#a0a0a0" /></g></Icon>
        </button>
      </div>
    </Group>
  );
}

function ControlPanel() {
  return (
    <Group title="Управление" titleClass="text-[#9ab4d2]" className="w-[176px]">
      <div className="mt-[6px] ml-[3px] grid grid-cols-[34px_46px_46px_31px] gap-x-[3px] gap-y-[2px]">
        <button aria-label="Пауза" className="h-[28px] flex items-center justify-center rounded-[3px] border border-[#c0c0c0]">
          <svg width="12" height="16" viewBox="0 0 12 16"><path d="M1.500 0.500H4.500V14.500H1.500ZM7.500 0.500H10.500V14.500H7.500Z" fill="#a8a8a8" stroke="#808080" /></svg>
        </button>
        <button aria-label="Однократно" className={BLUE_BTN}>
          <svg width="30" height="20" viewBox="0 0 30 20"><path d="M1 10C5 -2 10 -1 15 10S25 22 29 10" fill="none" stroke="#e00000" /></svg>
        </button>
        <button aria-label="Непрерывно" className="h-[28px] flex items-center justify-center rounded-[3px] border border-[#ff0000] bg-[#f4f4f4]">
          <svg width="34" height="20" viewBox="0 0 34 20" fill="none">
            <path d="M1 3L3 7L5 3L7 7L9 5L11 7L13 2L15 7L17 3L19 7L21 5L23 7L25 2L27 7L29 4L31 6" stroke="#ff0000" />
            <path d="M1 15H3L5 17L7 11L9 17L11 14L13 16L15 12L17 17L19 11L21 16L23 14L25 17L27 12L29 16L31 14" stroke="#0000ff" />
            <path d="M33 2V8L29 5ZM33 12V18L29 15Z" fill="#000080" />
          </svg>
        </button>
        <button aria-label="Автонастройка" className={BLUE_BTN}>
          <svg width="22" height="24" viewBox="0 0 22 24" fill="none">
            <text x="11" y="6" fontSize="7" fontWeight="700" textAnchor="middle" fill="#000" className="font-['DejaVu_Sans_Mono',monospace]">AUTO</text>
            <path d="M4 10Q11 5 18 10" stroke="#0050d0" strokeWidth="2" />
            <path d="M2 7V12H7ZM20 7V12H15Z" fill="#0050d0" />
            <circle cx="11" cy="16" r="6" fill="#fff" stroke="#000" strokeWidth="2" strokeDasharray="2 1" />
            <path d="M9 14L11 18L13 14" stroke="#0000ff" />
          </svg>
        </button>
        <button className={clsx(BLUE_BTN, 'col-span-2 text-[12px] font-bold')}>
          <svg width="10" height="20" viewBox="0 0 10 20" className="mr-[20px]"><path d="M0 0V20L10 10Z" fill="#00f000" /></svg>
          Пуск
        </button>
        <output className="h-[28px] flex items-center justify-center rounded-[4px] border border-[#0050a0] bg-[#f4f4f4] text-[12px] font-bold text-[#008000]">
          18.42
        </output>
        <button aria-label="Автопуск" className={BLUE_BTN}>
          <svg width="22" height="24" viewBox="0 0 22 24" fill="none">
            <text x="11" y="6" fontSize="7" fontWeight="700" textAnchor="middle" fill="#000" className="font-['DejaVu_Sans_Mono',monospace]">AUTO</text>
            <path d="M2 11V19L7 15Z" fill="#0000ff" />
            <path d="M1 15H4" stroke="#0000ff" />
            <path d="M4 21Q8 22 8 15T12 10T15 15" stroke="#800000" />
            <path d="M15.500 10.500V20.500L20.500 15.500Z" fill="#00e000" stroke="#000" />
          </svg>
        </button>
      </div>
    </Group>
  );
}

const Clock = ({ children }: { children: ReactNode }) => (
  <svg width="25" height="24" viewBox="0 0 25 24" fill="none" stroke="#000">
    <circle cx="13" cy="12" r="10.500" fill="#f4f4f4" stroke="#202020" strokeWidth="1.500" />
    <circle cx="13" cy="12" r="8.500" stroke="#a0a0a0" strokeDasharray="1 3.500" />
    <path d="M13 5V13L17 7" stroke="#808080" strokeWidth="2" />
    {children}
  </svg>
);

export default function App() {
  return (
    <div className={clsx('min-h-screen flex flex-col bg-[#efefef] text-black', UI_FONT)}>
      <TitleBar />
      <MenuRow />
      <Tabs />
      <main className="flex-1 border-l border-[#808080]">
        <div className="flex">
          <aside className="w-[29px] shrink-0 flex flex-col border-r-2 border-[#a0a0a0]">
            {sideTools.map(tool => (
              <button
                key={tool.name}
                aria-label={tool.name}
                className={clsx('h-[27px] flex items-center justify-center', tool.pressed && PRESSED)}
              >
                <Icon>{tool.icon}</Icon>
              </button>
            ))}
          </aside>
          <div className="min-w-0 flex-1">
            <Scope />
            <ScrollRow />
          </div>
        </div>
        <div className="mt-px mx-auto w-[546px] h-[7px] flex items-center gap-[6px] px-[5px] border border-[#a0a0a0] text-[#3399ff]">
          <DownArrow />
          <span className="flex-1 border-t border-dotted border-[#3399ff]" />
          <DownArrow />
        </div>
        <div className="mt-[3px] pb-px pr-[2px] flex justify-center gap-[4px]">
          <ChannelPanel />
          <Group title="Частота" titleClass="text-[#000080]" className="w-[106px]">
            <Knob
              box="-49 -40 103 64"
              width={103}
              height={64}
              value="333К"
              step={14}
              pointer="M12 -13L5 -11L11 -6Z"
              marks={[
                { label: '250К', x: 8, y: -28, deg: -82 },
                { label: '100К', x: -27, y: -18, deg: -127 },
                { label: '333К', x: 29, y: -18, deg: -49 },
                { label: '500К', x: 37, y: -6, deg: -20 },
                { label: '1К', x: -26, y: 22, deg: 137 },
                { label: '1М', x: 27, y: 22, deg: 38 },
              ]}
            />
          </Group>
          <SyncPanel />
          <ControlPanel />
          <Group title="Таймеры" titleClass="text-[#000080]" className="w-[69px]">
            <div className="mt-[6px] ml-2 flex flex-col gap-[2px]">
              <button aria-label="Таймер запуска" className={TIMER_BTN}>
                <Clock><path d="M1.500 6.500H6.500V3.500L12.500 9L6.500 14.500V11.500H1.500Z" fill="#5ab0a8" /></Clock>
                <DownArrow />
              </button>
              <button aria-label="Таймер остановки" className={TIMER_BTN}>
                <Clock><path d="M13.500 15.500H18.500V12.500L24 18L18.500 23.500V20.500H13.500Z" fill="#f040c0" /></Clock>
                <DownArrow />
              </button>
            </div>
          </Group>
        </div>
      </main>
      <footer className="shrink-0 pt-[2px] border-t border-[#808080]">
        <div className="h-[18px] flex gap-[2px] text-[11px] leading-4 border-b border-white">
          <span className="w-[190px] pl-[3px] border border-[#a0a0a0] border-r-white border-b-0 whitespace-nowrap">USB Осциллограф не подключен</span>
          <span className="flex-1 border border-[#a0a0a0] border-r-white border-b-0" />
          <span className="w-[45px] pl-[2px] border border-[#a0a0a0] border-r-0 border-b-0">1.9</span>
        </div>
        <div className="h-[2px] bg-[#2a2030]" />
      </footer>
    </div>
  );
}
